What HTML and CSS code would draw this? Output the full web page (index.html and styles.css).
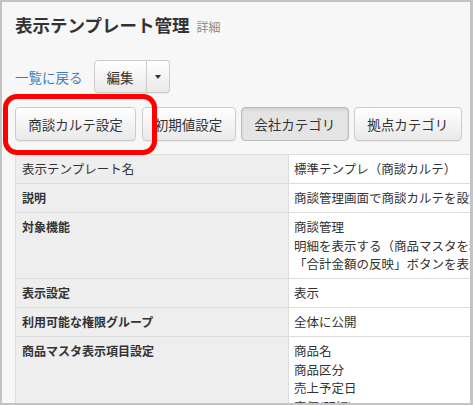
FILE: index.html
```html
<!DOCTYPE html>
<html lang="ja">
<head>
<meta charset="utf-8">
<title>表示テンプレート管理</title>
<link rel="stylesheet" href="styles.css">
</head>
<body>
<div class="frame">
  <div class="header">
    <h1 class="title">表示テンプレート管理</h1>
    <span class="sub">詳細</span>
  </div>
  <div class="toolbar">
    <a class="back" href="#">一覧に戻る</a>
    <div class="btn-group">
      <span class="btn edit">編集</span>
      <span class="btn caret-btn"><span class="caret"></span></span>
    </div>
  </div>
  <div class="tabs">
    <span class="btn tab">商談カルテ設定</span>
    <span class="btn tab">初期値設定</span>
    <span class="btn tab active">会社カテゴリ</span>
    <span class="btn tab">拠点カテゴリ</span>
  </div>
  <table class="detail">
    <colgroup>
      <col class="col-label">
      <col class="col-value">
    </colgroup>
    <tr>
      <th class="plain">表示テンプレート名</th>
      <td>標準テンプレ（商談カルテ）</td>
    </tr>
    <tr>
      <th>説明</th>
      <td>商談管理画面で商談カルテを設定</td>
    </tr>
    <tr>
      <th>対象機能</th>
      <td>商談管理<br>明細を表示する（商品マスタを利用）<br>「合計金額の反映」ボタンを表示</td>
    </tr>
    <tr>
      <th>表示設定</th>
      <td>表示</td>
    </tr>
    <tr>
      <th>利用可能な権限グループ</th>
      <td>全体に公開</td>
    </tr>
    <tr>
      <th>商品マスタ表示項目設定</th>
      <td>商品名<br>商品区分<br>売上予定日<br>定価(明細)</td>
    </tr>
  </table>
  <div class="highlight"></div>
</div>
</body>
</html>
```

FILE: styles.css
```css
html, body {
  margin: 0;
  padding: 0;
  background: #ffffff;
}

.frame {
  position: relative;
  width: 473px;
  height: 405px;
  box-sizing: border-box;
  border: 2px solid #c4c4c4;
  border-right-width: 3px;
  background: #f7f7f7;
  overflow: hidden;
  padding: 11px 0 0 13px;
  font-family: "Noto Sans CJK JP", "Noto Sans", sans-serif;
  color: #333333;
}

.header {
  display: flex;
  align-items: baseline;
  gap: 7px;
  height: 24px;
}

.title {
  margin: 0;
  font-size: 17.5px;
  font-weight: bold;
  line-height: 24px;
  color: #333333;
}

.sub {
  font-size: 12px;
  color: #8a8a8a;
}

.toolbar {
  display: flex;
  align-items: center;
  gap: 11px;
  margin-top: 23px;
  height: 33px;
}

.back {
  font-size: 13.5px;
  color: #3b7dc1;
  text-decoration: none;
}

.btn-group {
  display: flex;
  height: 33px;
}

.btn {
  display: inline-flex;
  align-items: center;
  justify-content: center;
  box-sizing: border-box;
  border: 1px solid #cccccc;
  border-radius: 4px;
  background: linear-gradient(#ffffff, #e9e9e9);
  box-shadow: 0 1px 1px rgba(0, 0, 0, 0.06);
  color: #333333;
  font-size: 13.5px;
  white-space: nowrap;
}

.edit {
  width: 53px;
  height: 33px;
  border-radius: 4px 0 0 4px;
}

.caret-btn {
  width: 23px;
  height: 33px;
  border-left: 0;
  border-radius: 0 4px 4px 0;
}

.caret {
  width: 0;
  height: 0;
  border-left: 3.5px solid transparent;
  border-right: 3.5px solid transparent;
  border-top: 4px solid #333333;
}

.tabs {
  display: flex;
  gap: 5.5px;
  margin-top: 14px;
  height: 34px;
}

.tab {
  height: 34px;
  padding: 0 12.25px;
}

.tab.active {
  background: #e4e4e4;
  border-color: #b9b9b9;
  box-shadow: inset 0 2px 3px rgba(0, 0, 0, 0.08);
}

.detail {
  margin-top: 13px;
  border-collapse: collapse;
  table-layout: fixed;
  width: 573px;
  font-size: 12.5px;
  line-height: 18.5px;
}

.col-label {
  width: 273px;
}

.col-value {
  width: 300px;
}

.detail th,
.detail td {
  border: 1px solid #dddddd;
  padding: 5px 6px 4.5px 6px;
  vertical-align: top;
  text-align: left;
  white-space: nowrap;
  overflow: hidden;
}

.detail th {
  background: #eeeeee;
  font-size: 12px;
  font-weight: bold;
  color: #333333;
}

.detail th.plain {
  font-weight: normal;
  font-size: 12.5px;
}

.detail td {
  background: #ffffff;
  padding-left: 5px;
}

.highlight {
  position: absolute;
  left: 1px;
  top: 92px;
  width: 154px;
  height: 61px;
  box-sizing: border-box;
  border: 5px solid #ff0000;
  border-radius: 14px;
}
```
